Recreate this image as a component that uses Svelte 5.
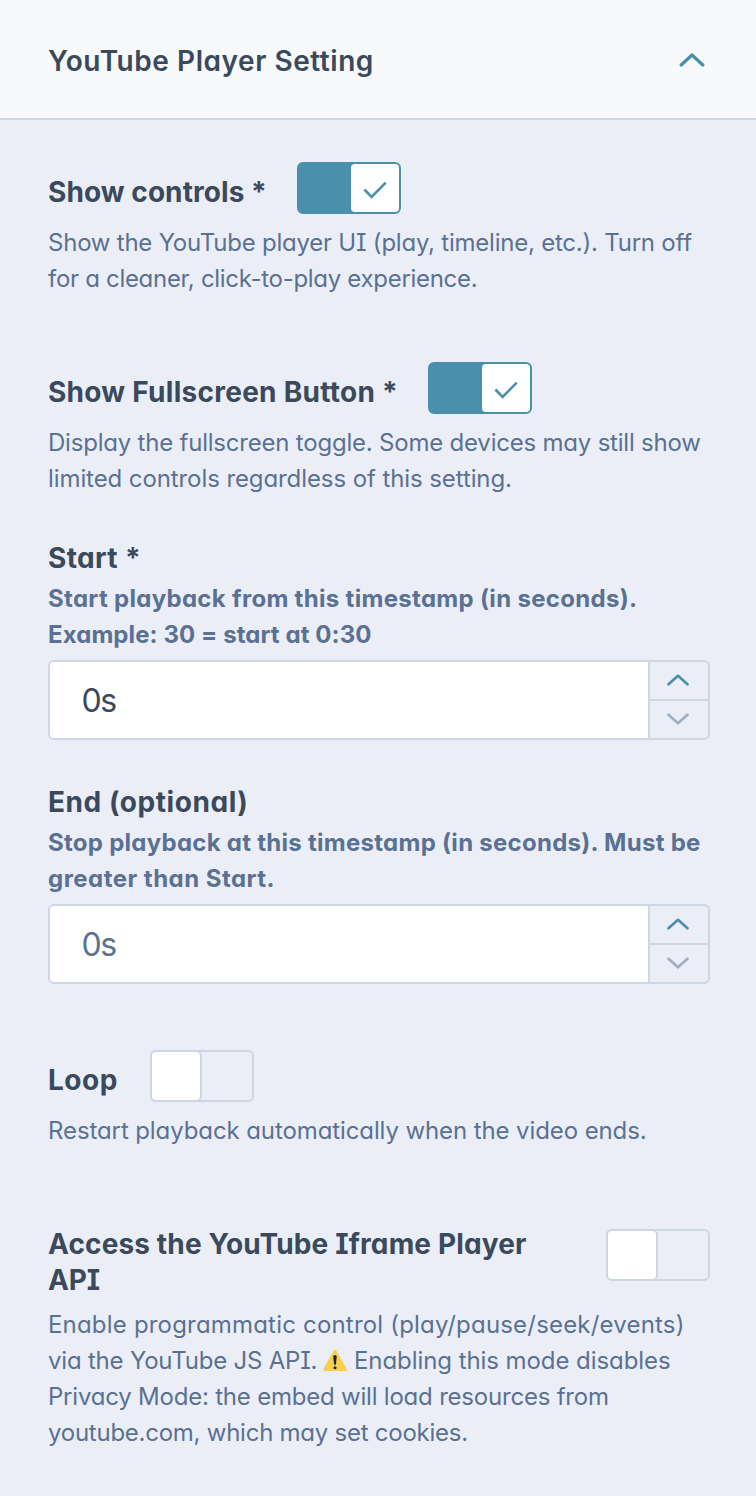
<script>
  const t = (text, ls = 0) => ({ text, ls });

  const showControls = {
    width: 353,
    label: [t('Show controls *', 0.07)],
    help: [
      t('Show the YouTube player UI (play, timeline, etc.). Turn off', -0.23),
      t('for a cleaner, click-to-play experience.', -0.3)
    ]
  };
  const fullscreen = {
    width: 484,
    label: [t('Show Fullscreen Button *', 0.27)],
    help: [
      t('Display the fullscreen toggle. Some devices may still show', -0.21),
      t('limited controls regardless of this setting.', -0.09)
    ]
  };
  const start = {
    label: t('Start *', 0.35),
    help: [t('Start playback from this timestamp (in seconds).', 0.31), t('Example: 30 = start at 0:30', 0.08)]
  };
  const end = {
    label: t('End (optional)', 0.55),
    help: [
      t('Stop playback at this timestamp (in seconds). Must be', 0.27),
      t('greater than Start.', 0.47)
    ]
  };
  const loop = {
    width: 206,
    label: [t('Loop', 0.54)],
    help: [t('Restart playback automatically when the video ends.', -0.1)]
  };
  const api = { label: [t('Access the YouTube Iframe Player', 0.14), t('API', -0.2)] };
</script>

{#snippet line(l)}
  <span class="line" style="letter-spacing:{l.ls}px">{l.text}</span>
{/snippet}

{#snippet toggle(on)}
  <button class="toggle" class:on aria-label="toggle">
    <span class="thumb">
      {#if on}
        <svg width="48" height="48" viewBox="0 0 48 48"><path d="M13.4 25.5 L20.6 33 L34.7 18.7" /></svg>
      {/if}
    </span>
  </button>
{/snippet}

{#snippet toggleField(f, on)}
  <section class="toggle-field">
    <div class="toggle-row" style="width:{f.width}px">
      <div class="label">{#each f.label as l}{@render line(l)}{/each}</div>
      {@render toggle(on)}
    </div>
    <div class="help">{#each f.help as l}{@render line(l)}{/each}</div>
  </section>
{/snippet}

{#snippet numberField(f, placeholder)}
  <section class="number-field">
    <div class="label">{@render line(f.label)}</div>
    <div class="help strong">{#each f.help as l}{@render line(l)}{/each}</div>
    <div class="number">
      <div class="value" class:placeholder>0s</div>
      <div class="steps">
        <div class="step up">
          <svg width="24" height="14" viewBox="0 0 24 14"><path d="M2.5 11.3 L12 2.8 L21.5 11.3" /></svg>
        </div>
        <div class="step down">
          <svg width="24" height="14" viewBox="0 0 24 14"><path d="M2.5 2.8 L12 11.3 L21.5 2.8" /></svg>
        </div>
      </div>
    </div>
  </section>
{/snippet}

<div class="panel">
  <header>
    <span class="title">YouTube Player Setting</span>
    <svg width="28" height="16" viewBox="0 0 28 16"><path d="M3.2 12 L14 2 L24.8 12" /></svg>
  </header>
  <main>
    {@render toggleField(showControls, true)}
    {@render toggleField(fullscreen, true)}
    {@render numberField(start, false)}
    {@render numberField(end, true)}
    {@render toggleField(loop, false)}
    <section class="api">
      <div class="api-row">
        <div class="label">{#each api.label as l}{@render line(l)}{/each}</div>
        {@render toggle(false)}
      </div>
      <div class="help">
        {@render line(t('Enable programmatic control (play/pause/seek/events)', 0.19))}
        <div class="mixed">
          <span class="via">via the YouTube JS API.</span>
          <svg class="warn" width="26" height="24" viewBox="0 0 26 24">
            <path d="M11.9 2.3 Q13 .6 14.1 2.3 L24.8 20.9 Q25.6 23 23.5 23 L2.5 23 Q.4 23 1.2 20.9 Z" fill="#f8d04f" />
            <path d="M11.3 8.6 Q11.3 7 13 7 Q14.7 7 14.7 8.6 L14 16 Q13.8 17 13 17 Q12.2 17 12 16 Z" fill="#26241f" />
            <circle cx="13" cy="19.7" r="1.5" fill="#26241f" />
          </svg>
          <span class="enabling">Enabling this mode disables</span>
        </div>
        {@render line(t('Privacy Mode: the embed will load resources from', -0.21))}
        {@render line(t('youtube.com, which may set cookies.', -0.25))}
      </div>
    </section>
  </main>
</div>

<style>
  :global(body) { background: #ebeef6; }
  .panel {
    height: 1496px;
    overflow: hidden;
    background: #ebeef6;
    color: #3b495c;
    font-family: Inter, sans-serif;
    font-feature-settings: 'cv11' 1, 'cv08' 1;
    box-sizing: border-box;
  }
  header {
    display: flex;
    align-items: center;
    justify-content: space-between;
    height: 114px;
    padding: 4px 50px 0 48px;
    background: #f7f9fb;
    border-bottom: 2px solid #cdd6e3;
  }
  .title { font-size: 28px; font-weight: 600; line-height: 36px; letter-spacing: 0.55px; }
  svg { display: block; fill: none; }
  header svg { stroke: #4a90ad; stroke-width: 3.3; stroke-linecap: round; stroke-linejoin: round; }
  main { display: flex; flex-direction: column; padding: 42px 46px 0 48px; }
  .line { display: block; white-space: nowrap; }
  .label { font-size: 28px; font-weight: 700; line-height: 36px; }
  .help { font-size: 24px; line-height: 36px; color: #5a7193; }
  .strong { font-weight: 700; }
  .toggle-field { margin-bottom: 65px; }
  .toggle-row { display: flex; justify-content: space-between; height: 52px; }
  .toggle-row .label { padding-top: 12px; }
  .toggle-field .help { margin-top: 11px; }
  .toggle {
    display: flex;
    flex: none;
    width: 104px;
    height: 52px;
    padding: 0;
    box-sizing: border-box;
    border: 2px solid #cdd6e3;
    border-radius: 6px;
    background: transparent;
  }
  .thumb {
    width: 48px;
    height: 48px;
    border-radius: 4px;
    background: #fff;
    box-shadow: 0 0 0 2px #cdd6e3;
  }
  .toggle.on { justify-content: flex-end; background: #4a90ad; border-color: #4a90ad; }
  .on .thumb { box-shadow: none; }
  .thumb svg { stroke: #4a90ad; stroke-width: 2.6; }
  .number-field { margin-bottom: 44px; }
  .toggle-field + .number-field { margin-top: -22px; }
  .number-field + .toggle-field { margin-top: 22px; }
  .number-field .help { margin-top: 5px; }
  .number {
    display: flex;
    height: 80px;
    margin-top: 7px;
    box-sizing: border-box;
    border: 2px solid #cdd6e3;
    border-radius: 6px;
    background: #ebeef6;
    overflow: hidden;
  }
  .value {
    flex: 1;
    padding: 1px 0 0 31.5px;
    background: #fff;
    font-size: 32px;
    line-height: 76px;
    letter-spacing: -1.5px;
  }
  .placeholder { color: #5a7193; }
  .steps { width: 58px; border-left: 2px solid #cdd6e3; }
  .step { display: flex; justify-content: center; height: 37px; box-sizing: border-box; padding-right: 2px; }
  .step svg { stroke-width: 2.7; stroke-linecap: round; stroke-linejoin: round; }
  .up { padding-top: 11px; border-bottom: 2px solid #cdd6e3; height: 39px; }
  .up svg { stroke: #4a90ad; }
  .down { padding-top: 11px; }
  .down svg { stroke: #a0aec4; }
  .api { margin-top: 12px; }
  .api-row { display: flex; justify-content: space-between; }
  .api-row .toggle { margin-top: 3px; }
  .api .help { margin-top: 9px; }
  .mixed { display: flex; align-items: center; white-space: nowrap; height: 36px; }
  .via { width: 274px; letter-spacing: -0.2px; }
  .enabling { letter-spacing: -0.07px; }
  .warn { flex: none; margin: -2px 6px 0 0; }
</style>
